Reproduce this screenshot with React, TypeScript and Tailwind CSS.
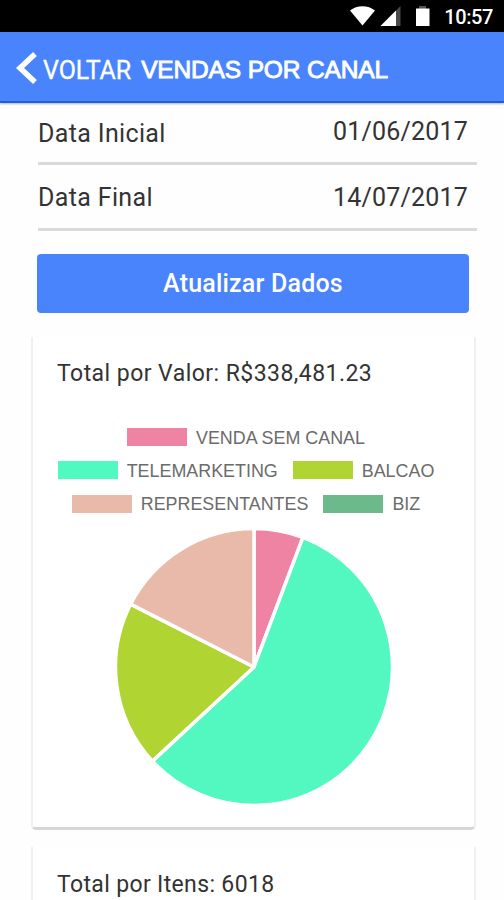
const legendRows = [
    [{ label: "VENDA SEM CANAL", color: "bg-[#ee83a3]" }],
    [
        { label: "TELEMARKETING", color: "bg-[#4ff9c0]" },
        { label: "BALCAO", color: "bg-[#b0d432]" },
    ],
    [
        { label: "REPRESENTANTES", color: "bg-[#e9baaa]" },
        { label: "BIZ", color: "bg-[#6cba8b]" },
    ],
];

// start / end angles in degrees, clockwise from the top
const slices = [
    { from: 0, to: 20.7, fill: "#ee83a3" },
    { from: 20.7, to: 227.2, fill: "#52f8c0" },
    { from: 227.2, to: 297, fill: "#b0d432" },
    { from: 297, to: 360, fill: "#e9baaa" },
];

const RADIUS = 138.5;

const slicePath = (from: number, to: number) => {
    const point = (deg: number) => {
        const rad = (deg * Math.PI) / 180;
        return `${140 + RADIUS * Math.sin(rad)} ${140 - RADIUS * Math.cos(rad)}`;
    };
    const large = to - from > 180 ? 1 : 0;

    return `M140 140 L${point(from)} A${RADIUS} ${RADIUS} 0 ${large} 1 ${point(to)} Z`;
};

const StatusBar = () => (
    <div className="flex h-8 shrink-0 items-center justify-end bg-black pr-[11px] text-white">
        <svg width="83" height="24" viewBox="0 0 83 24" className="mr-[12px]">
            <path d="M1 6.5C8 .7 19 .7 26 6.5L13.5 21.5Z" fill="#fff" />
            <path d="M51.5 2V22H31.5Z" fill="#4a4a4a" />
            <path d="M47 6.5V22H31.5Z" fill="#fff" />
            <path d="M70 2h7v3h-7z" fill="#555" />
            <path d="M67 4.5h13.5V22h-13.5z" fill="#fff" />
        </svg>
        <span className="pt-px text-[20px] leading-8 font-medium tracking-[-0.4px]">10:57</span>
    </div>
);

const Header = () => (
    <div className="flex h-[71px] shrink-0 items-center border-b-2 border-[#1e60dc] bg-[#4a84fd] pt-1 pl-4 text-white shadow-[0_1px_2px_rgba(0,0,0,0.3)]">
        <svg width="21" height="34" viewBox="0 0 21 34" fill="none" className="mb-[2px]">
            <path d="M19 3 L4 17 L19 31" stroke="#fff" strokeWidth="5.5" />
        </svg>
        <span className="mt-[5px] ml-[6px] text-[25px] tracking-[-0.1px] [-webkit-text-stroke:0.3px_white]">
            VOLTAR
        </span>
        <span className="mt-[4px] ml-[10px] font-['Liberation_Sans',sans-serif] text-[24.5px] tracking-[-0.15px] [-webkit-text-stroke:0.9px_white]">
            VENDAS POR CANAL
        </span>
    </div>
);

const DateRow = ({ label, value }: { label: string; value: string }) => (
    <div className="group flex h-[66px] items-center justify-between border-b-[3px] border-[#dadada] pt-[4px] pr-[9px] text-[25px] tracking-[0.35px] text-[#333]">
        <span className="group-first:mt-[2px] group-last:-mt-[2px]">{label}</span>
        <span className="-mt-[2px] tracking-[0.2px]">{value}</span>
    </div>
);

const Legend = () => (
    <div className="flex flex-col gap-[5.3px]">
        {legendRows.map((row, i) => (
            <div key={i} className="flex h-7 items-center justify-center gap-[15px]">
                {row.map((item) => (
                    <div key={item.label} className="flex items-center gap-[9px]">
                        <div className={`h-[18px] w-[60px] ${item.color}`} />
                        <span className="mt-px font-['Liberation_Sans',sans-serif] text-[17.9px] leading-7 text-[#6b6b6b]">
                            {item.label}
                        </span>
                    </div>
                ))}
            </div>
        ))}
    </div>
);

const PieChart = () => (
    <svg width="280" height="280" viewBox="0 0 280 280" className="mx-auto">
        {slices.map((slice) => (
            <path
                key={slice.fill}
                d={slicePath(slice.from, slice.to)}
                fill={slice.fill}
                stroke="#fff"
                strokeWidth="3.5"
                strokeLinejoin="round"
            />
        ))}
    </svg>
);

const App = () => {
    return (
        <div className="flex h-[900px] w-[504px] flex-col overflow-hidden bg-[#fefefe] font-[Roboto,sans-serif]">
            <StatusBar />
            <Header />
            <div className="-mt-1 mr-[27px] ml-[38px] shrink-0">
                <DateRow label="Data Inicial" value="01/06/2017" />
                <DateRow label="Data Final" value="14/07/2017" />
            </div>
            <button className="mt-[23px] ml-[37px] h-[59px] w-[432px] shrink-0 rounded-[4px] bg-[#4a84fd] text-[25px] font-medium tracking-[0.2px] text-white">
                Atualizar Dados
            </button>
            <div className="mt-6 ml-[31px] h-[493px] w-[445px] shrink-0 rounded-b-[5px] border-x-2 border-b-[3px] border-x-[#f0f0f0] border-b-[#d6d6d6] bg-white">
                <div className="pt-[21px] pl-6 text-[23px] leading-8 tracking-[0.45px] text-[#333]">
                    Total por Valor: R$338,481.23
                </div>
                <div className="mt-[33px] pr-[15px]">
                    <Legend />
                </div>
                <div className="mt-[9px]">
                    <PieChart />
                </div>
            </div>
            <div className="mt-[17px] ml-[31px] h-[80px] w-[445px] shrink-0 border-x-2 border-[#f0f0f0] bg-white">
                <div className="pt-[22px] pl-6 text-[23px] leading-8 tracking-[0.35px] text-[#333]">
                    Total por Itens: 6018
                </div>
            </div>
        </div>
    );
};

export default App;
